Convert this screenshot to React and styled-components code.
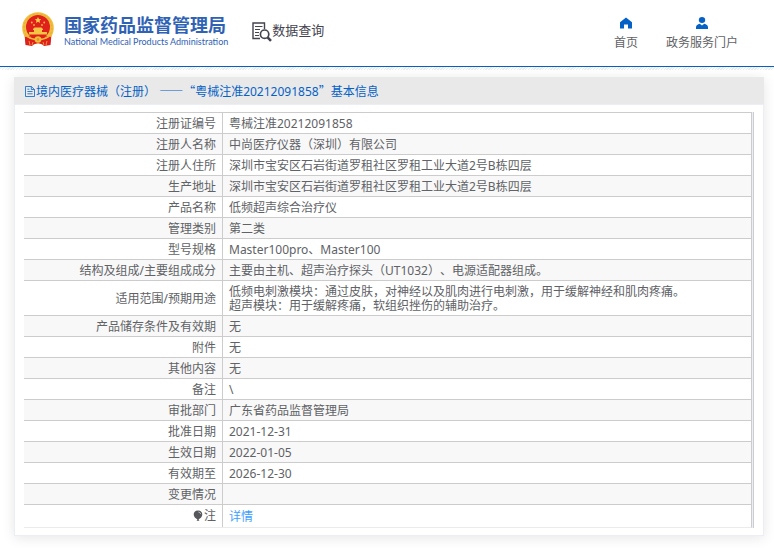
import React from "react";
import styled, { createGlobalStyle } from "styled-components";

const details = [
  { label: "注册证编号", value: "粤械注准20212091858" },
  { label: "注册人名称", value: "中尚医疗仪器（深圳）有限公司" },
  { label: "注册人住所", value: "深圳市宝安区石岩街道罗租社区罗租工业大道2号B栋四层" },
  { label: "生产地址", value: "深圳市宝安区石岩街道罗租社区罗租工业大道2号B栋四层" },
  { label: "产品名称", value: "低频超声综合治疗仪" },
  { label: "管理类别", value: "第二类" },
  { label: "型号规格", value: "Master100pro、Master100" },
  { label: "结构及组成/主要组成成分", value: "主要由主机、超声治疗探头（UT1032）、电源适配器组成。" },
  {
    label: "适用范围/预期用途",
    value:
      "低频电刺激模块：通过皮肤，对神经以及肌肉进行电刺激，用于缓解神经和肌肉疼痛。\n超声模块：用于缓解疼痛，软组织挫伤的辅助治疗。",
  },
  { label: "产品储存条件及有效期", value: "无" },
  { label: "附件", value: "无" },
  { label: "其他内容", value: "无" },
  { label: "备注", value: "\\" },
  { label: "审批部门", value: "广东省药品监督管理局" },
  { label: "批准日期", value: "2021-12-31" },
  { label: "生效日期", value: "2022-01-05" },
  { label: "有效期至", value: "2026-12-30" },
  { label: "变更情况", value: "" },
];

function Emblem() {
  return (
    <svg width="32" height="34" viewBox="0 0 32 34" aria-hidden="true">
      <path d="M2.5 22 L3.5 33 L10 34 L13 31 H19 L22 34 L28.5 33 L29.5 22 Z" fill="#d8201c" />
      <circle cx="16" cy="16" r="15.8" fill="#f2bd3c" />
      <circle cx="16" cy="16" r="14" fill="none" stroke="#e5a933" strokeWidth="1" strokeDasharray="2 2" />
      <circle cx="16" cy="15" r="12" fill="#df201c" />
      <path d="M16 5 l1 2.1 2.2.2 -1.7 1.5 .6 2.2 -2.1-1.2 -2.1 1.2 .6-2.2 -1.7-1.5 2.2-.2z" fill="#f8cf45" />
      <g fill="#f4b83c">
        <circle cx="9.8" cy="10.5" r="0.9" />
        <circle cx="12" cy="13" r="0.9" />
        <circle cx="20" cy="13" r="0.9" />
        <circle cx="22.2" cy="10.5" r="0.9" />
      </g>
      <path d="M11 17 L12.5 15.5 H19.5 L21 17 V18 H20 V20 H25 V22.5 H7 V20 H12 V18 H11 Z" fill="#f5c544" />
      <path d="M3 25 Q9 22.5 13 27 H19 Q23 22.5 29 25 L28 32 Q22 34 16 31 Q10 34 4 32 Z" fill="#df201c" />
      <path d="M4.5 24 Q9 27 13 27.5 H19 Q23 27 27.5 24" fill="none" stroke="#f2bd3c" strokeWidth="1.6" />
      <circle cx="16" cy="27.5" r="3.3" fill="#f2bd3c" />
      <circle cx="16" cy="27.5" r="1.4" fill="#e09a2c" />
      <path d="M7 29 L8 33 M25 29 L24 33 M11 30 L10 33 M21 30 L22 33" fill="none" stroke="#eea735" strokeWidth="0.9" />
    </svg>
  );
}

function SearchDocIcon() {
  return (
    <svg width="20" height="20" viewBox="0 0 20 20" fill="none" stroke="#45434f" aria-hidden="true">
      <path d="M12.5 7 V1 H1 V16.5 H8" strokeWidth="1.4" />
      <path d="M3 4.5 H10.5 M3 7.5 H8 M3 10.5 H7 M3 13.5 H7" strokeWidth="1" />
      <circle cx="12.6" cy="12.2" r="4.2" strokeWidth="1.7" />
      <path d="M15.6 15.4 L19 18.8" strokeWidth="2.6" />
    </svg>
  );
}

function HomeIcon() {
  return (
    <svg width="12" height="12" viewBox="0 0 12 12" aria-hidden="true">
      <path d="M6 0.4 L12 5.2 V11.4 H8 V7.4 H4 V11.4 H0 V5.2 Z" fill="#0561c6" />
    </svg>
  );
}

function UserIcon() {
  return (
    <svg width="12" height="12" viewBox="0 0 12 12" aria-hidden="true">
      <ellipse cx="6" cy="3" rx="3.2" ry="3" fill="#0561c6" />
      <path d="M0 12 V10 Q0.4 7.6 3.8 6.8 L6 8.4 L8.2 6.8 Q11.6 7.6 12 10 V12 Z" fill="#0561c6" />
    </svg>
  );
}

function DocumentIcon() {
  return (
    <svg width="10" height="11" viewBox="0 0 10 11" fill="none" stroke="#0561c6" strokeWidth="0.8" aria-hidden="true">
      <path d="M0.5 0.5 H6.3 L9.5 3.5 V10.5 H0.5 Z M6.3 0.5 V3.5 H9.5" />
      <path d="M2.4 5.5 H7.6 M2.4 7.8 H7.6 M2.4 3.2 H4.4" />
    </svg>
  );
}

function BalloonIcon() {
  return (
    <svg width="10" height="12" viewBox="0 0 10 12" aria-hidden="true">
      <path d="M5 0.5 C8 0.5 9.3 2.5 9.3 4.6 C9.3 6.8 7.4 8.8 5.6 9.3 L6.4 10.8 H3.6 L4.4 9.3 C2.6 8.8 0.7 6.8 0.7 4.6 C0.7 2.5 2 0.5 5 0.5 Z" fill="#55575b" />
      <path d="M5.4 2 Q7.4 2.2 7.8 4.2" stroke="#cfd0d3" strokeWidth="0.8" fill="none" />
    </svg>
  );
}

function App() {
  return (
    <Page lang="zh-CN">
      <GlobalStyle />
      <Header>
        <Brand href="#">
          <Emblem />
          <BrandText>
            <BrandName>国家药品监督管理局</BrandName>
            <BrandSub>National Medical Products Administration</BrandSub>
          </BrandText>
        </Brand>
        <QueryTitle>
          <SearchDocIcon />
          数据查询
        </QueryTitle>
        <Nav>
          <NavLink href="#">
            <HomeIcon />
            首页
          </NavLink>
          <NavLink href="#">
            <UserIcon />
            政务服务门户
          </NavLink>
        </Nav>
      </Header>
      <Hatch />

      <Main>
        <Card>
          <CardTitle>
            <DocumentIcon />
            <span>
              境内医疗器械（注册） <Cjk>——“</Cjk>粤械注准20212091858<Cjk>”</Cjk>基本信息
            </span>
          </CardTitle>
          <CardBody>
            <TableFrame>
              <Table>
                <tbody>
                  {details.map((item) => (
                    <Row key={item.label}>
                      <Label scope="row">{item.label}</Label>
                      <Value>{item.value}</Value>
                    </Row>
                  ))}
                  <Row $last>
                    <Label scope="row">
                      <Note>
                        <BalloonIcon />注
                      </Note>
                    </Label>
                    <Value>
                      <DetailLink href="#">详情</DetailLink>
                    </Value>
                  </Row>
                </tbody>
              </Table>
            </TableFrame>
          </CardBody>
        </Card>
      </Main>
    </Page>
  );
}

export default App;

const GlobalStyle = createGlobalStyle`
  * {
    box-sizing: border-box;
  }
  body {
    margin: 0;
    background: #fff;
  }
  svg {
    display: block;
    flex: none;
  }
  a {
    color: inherit;
    text-decoration: none;
  }
`;

const Page = styled.div`
  color: #606266;
  font-family: "Noto Sans", "Noto Sans CJK SC", sans-serif;
  font-size: 12px;
  line-height: 14px;
  text-spacing-trim: space-all;
`;

const Header = styled.header`
  display: flex;
  align-items: center;
  height: 67px;
  padding: 0 36px 0 22px;
  border-bottom: 1px solid #0561c6;
`;

const Hatch = styled.div`
  height: 3px;
  background: repeating-linear-gradient(135deg, #fff 0 1px, #ececec 1px 2px);
`;

const Brand = styled.a`
  display: flex;
  align-items: center;
  gap: 10px;
  padding-bottom: 8px;
`;

const BrandText = styled.div`
  display: flex;
  flex-direction: column;
  padding-top: 6px;
  color: #2f62b5;
  white-space: nowrap;
`;

const BrandName = styled.span`
  font-family: "Noto Sans CJK SC", sans-serif;
  font-size: 18px;
  font-weight: 700;
  line-height: 20px;
`;

const BrandSub = styled.span`
  font-family: "Lato", sans-serif;
  font-size: 9px;
  font-weight: 400;
  line-height: 16px;
`;

const QueryTitle = styled.h1`
  display: flex;
  align-items: flex-start;
  margin: 0 0 0 24px;
  padding-bottom: 2px;
  color: #45434f;
  font-size: 13px;
  font-weight: 400;
  line-height: 16px;
  white-space: nowrap;
`;

const Nav = styled.nav`
  display: flex;
  gap: 28px;
  margin-left: auto;
`;

const NavLink = styled.a`
  display: flex;
  flex-direction: column;
  align-items: center;
  gap: 7px;
  white-space: nowrap;
`;

const Main = styled.main`
  padding: 7px 10px 12px 14px;
`;

const Card = styled.section`
  border: 1px solid #ebeef5;
  background: #fff;
  box-shadow: 0 2px 12px rgba(0, 0, 0, 0.1);
`;

const CardTitle = styled.h2`
  display: flex;
  align-items: center;
  gap: 1px;
  height: 28px;
  margin: -1px -1px 0;
  padding: 2px 11px 0;
  border-bottom: 1px solid #ebeef5;
  background: #e9e9e9;
  color: #0561c6;
  font-size: 12px;
  font-weight: 400;
`;

const Cjk = styled.span`
  font-family: "Noto Sans CJK SC", sans-serif;
`;

const CardBody = styled.div`
  padding: 7px 9px;
`;

const TableFrame = styled.div`
  padding-right: 1px;
  border-right: 1px solid #ccccd2;
  background: #ebeef5;
`;

const Table = styled.table`
  width: 100%;
  border-collapse: separate;
  border-spacing: 0;
  border-right: 1px solid #ccc;
  border-bottom: 1px solid #ebebeb;
`;

const Row = styled.tr`
  height: ${(props) => (props.$last ? "23px" : "21px")};
  background: #fff;
  &:nth-child(even) {
    background: #f8f8f8;
  }
  ${(props) => props.$last && "&& { background: #fff; }"}
`;

const Label = styled.th`
  width: 199px;
  padding: 4px 6px 2px;
  border-top: 1px solid #ccc;
  border-right: 1px solid #ccc;
  font-weight: 400;
  text-align: right;
  vertical-align: middle;
`;

const Value = styled.td`
  padding: 4px 6px 2px;
  border-top: 1px solid #ccc;
  vertical-align: middle;
  white-space: pre-line;
`;

const Note = styled.span`
  display: inline-flex;
  align-items: center;
  gap: 1px;
`;

const DetailLink = styled.a`
  color: #409eff;
`;
